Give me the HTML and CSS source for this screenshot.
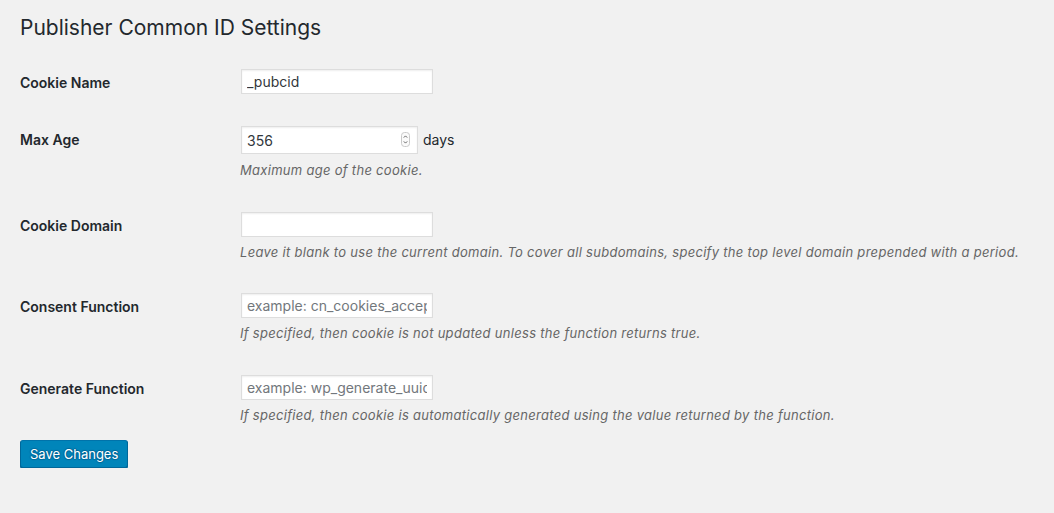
FILE: index.html
```html
<!DOCTYPE html>
<html lang="en">
<head>
<meta charset="utf-8">
<title>Publisher Common ID Settings</title>
<link rel="stylesheet" href="styles.css">
</head>
<body>
<div class="wrap">
  <h1 class="title">Publisher Common ID Settings</h1>
  <form class="settings">
    <div class="form-table">
      <div class="row">
        <label class="th" for="cookie-name">Cookie Name</label>
        <div class="td">
          <input class="field" id="cookie-name" type="text" value="_pubcid">
        </div>
      </div>
      <div class="row">
        <label class="th" for="max-age">Max Age</label>
        <div class="td">
          <div class="inline">
            <span class="num-wrap">
              <input class="field field-num" id="max-age" type="text" value="356">
              <span class="spinner" aria-hidden="true">
                <svg width="9" height="15" viewBox="0 0 9 15"><rect x="0.5" y="0.5" width="8" height="14" rx="3" fill="#fafafa" stroke="#c9c9c9"/><path d="M2.8 5.6 L4.5 3.9 L6.2 5.6" fill="none" stroke="#555" stroke-width="0.9"/><path d="M2.8 9.4 L4.5 11.1 L6.2 9.4" fill="none" stroke="#555" stroke-width="0.9"/></svg>
              </span>
            </span>
            <span class="unit">days</span>
          </div>
          <p class="description">Maximum age of the cookie.</p>
        </div>
      </div>
      <div class="row">
        <label class="th" for="cookie-domain">Cookie Domain</label>
        <div class="td">
          <input class="field" id="cookie-domain" type="text" value="">
          <p class="description">Leave it blank to use the current domain. To cover all subdomains, specify the top level domain prepended with a period.</p>
        </div>
      </div>
      <div class="row">
        <label class="th" for="consent-fn">Consent Function</label>
        <div class="td">
          <input class="field" id="consent-fn" type="text" placeholder="example: cn_cookies_accepted">
          <p class="description">If specified, then cookie is not updated unless the function returns true.</p>
        </div>
      </div>
      <div class="row">
        <label class="th" for="generate-fn">Generate Function</label>
        <div class="td">
          <input class="field" id="generate-fn" type="text" placeholder="example: wp_generate_uuid4">
          <p class="description">If specified, then cookie is automatically generated using the value returned by the function.</p>
        </div>
      </div>
    </div>
    <p class="submit"><button type="button" class="button-primary">Save Changes</button></p>
  </form>
</div>
</body>
</html>
```
FILE: styles.css
```css
html, body {
  margin: 0;
  padding: 0;
  background: #f1f1f1;
}
body {
  font-family: "Inter", "Liberation Sans", sans-serif;
  color: #23282d;
  font-size: 13px;
  line-height: 1.4;
}
.wrap {
  padding: 0 20px;
}
.title {
  font-size: 21px;
  font-weight: 400;
  line-height: 30px;
  margin: 13px 0 0;
  color: #23282d;
}
.settings {
  margin-top: 10px;
}
.row {
  display: grid;
  grid-template-columns: 210px 1fr;
}
.th {
  font-size: 14px;
  font-weight: 600;
  line-height: 18px;
  padding: 21px 10px 18px 0;
}
.td {
  padding: 15px 10px;
}
.field {
  box-sizing: border-box;
  display: block;
  margin: 1px;
  width: 192px;
  height: 25px;
  padding: 3px 5px;
  border: 1px solid #ddd;
  background: #fff;
  box-shadow: inset 0 1px 2px rgba(0,0,0,.07);
  color: #32373c;
  font-family: inherit;
  font-size: 14px;
  outline: none;
}
.field::placeholder {
  color: #72777c;
}
.inline {
  display: flex;
  align-items: center;
}
.num-wrap {
  position: relative;
  display: block;
}
.field-num {
  width: 177px;
  height: 28px;
}
.spinner {
  position: absolute;
  top: 7px;
  right: 9px;
  display: block;
  line-height: 0;
}
.unit {
  font-size: 14px;
  margin-left: 4px;
}
.description {
  margin: 6px 0 0;
  font-size: 13px;
  line-height: 19.5px;
  font-style: italic;
  letter-spacing: 0.29px;
  color: #666;
}
.submit {
  margin: 0;
}
.button-primary {
  box-sizing: border-box;
  height: 28px;
  padding: 0 9px 1px;
  font-family: inherit;
  font-size: 13px;
  line-height: 26px;
  color: #fff;
  background: #0085ba;
  border: 1px solid;
  border-color: #0073aa #006799 #006799;
  border-radius: 3px;
  box-shadow: 0 1px 0 #006799;
  text-shadow: 0 -1px 1px #006799, 1px 0 1px #006799, 0 1px 1px #006799, -1px 0 1px #006799;
  cursor: pointer;
}
```
